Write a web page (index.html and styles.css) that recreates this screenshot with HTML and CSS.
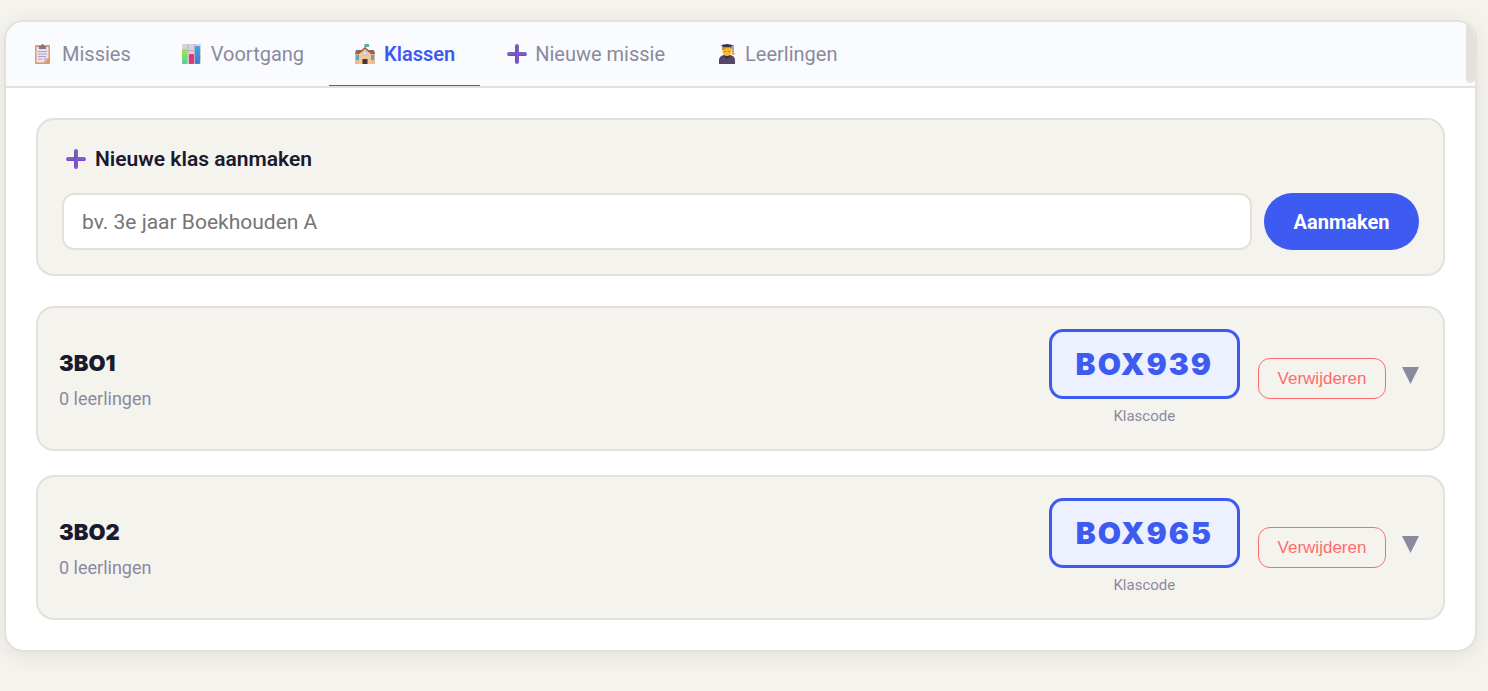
FILE: index.html
```html
<!DOCTYPE html>
<html lang="nl">
<head>
    <meta charset="UTF-8">
    <meta name="viewport" content="width=device-width, initial-scale=1.0">
    <title>Klassen</title>
    <link rel="stylesheet" href="styles.css">
</head>
<body>
    <!-- Shared icon shapes -->
    <svg class="defs" width="0" height="0" aria-hidden="true">
        <defs>
            <linearGradient id="purple" x1="0" y1="0" x2="0" y2="1">
                <stop offset="0" stop-color="#7a68b4"/>
                <stop offset="1" stop-color="#8552d8"/>
            </linearGradient>
            <linearGradient id="green" x1="0" y1="0" x2="0" y2="1">
                <stop offset="0" stop-color="#a5e34f"/>
                <stop offset="1" stop-color="#52d19a"/>
            </linearGradient>
            <linearGradient id="blue" x1="0" y1="0" x2="0" y2="1">
                <stop offset="0" stop-color="#35a7f4"/>
                <stop offset="1" stop-color="#3b7fc8"/>
            </linearGradient>
            <symbol id="plus" viewBox="0 0 24 24">
                <rect x="2" y="10" width="20" height="4" rx="2" fill="url(#purple)"/>
                <rect x="10" y="2" width="4" height="20" rx="2" fill="url(#purple)"/>
                <path d="M3 13.500H10M14 13.500H21" stroke="#7e3fe0"/>
                <path d="M11 4V20" stroke="#67509f" stroke-width="1"/>
            </symbol>
        </defs>
    </svg>

    <main class="panel">
        <nav class="tabs">
            <button class="tab" type="button">
                <svg class="icon" viewBox="0 0 24 24">
                    <rect x="3" y="3" width="15" height="19" rx="1" fill="#e29a64"/>
                    <path d="M4.500 5H16.500V16L12 20.500H4.500Z" fill="#e9e0f2"/>
                    <path d="M12 20.500V16H16.500Z" fill="#c9b8d6"/>
                    <path d="M6 9.500H15M6 12H15M6 14.500H14M6 17H10" stroke="#afa3c0"/>
                    <path d="M7 4H9Q9 2 10.500 2T12 4H14V7H7Z" fill="#83757f"/>
                </svg>
                Missies
            </button>
            <button class="tab" type="button">
                <svg class="icon" viewBox="0 0 24 24">
                    <rect x="1" y="2" width="19" height="20" rx="1" fill="#d8d2de"/>
                    <path d="M1 8.500H20M1 15H20M7 2V22M13.500 2V22" stroke="#b9b0c2"/>
                    <rect x="1" y="7" width="5" height="15" rx="1" fill="url(#green)"/>
                    <rect x="8" y="12" width="5" height="10" rx="1" fill="#e23574"/>
                    <rect x="14" y="4" width="5" height="18" rx="1" fill="url(#blue)"/>
                </svg>
                Voortgang
            </button>
            <button class="tab active" type="button">
                <svg class="icon" viewBox="0 0 24 24">
                    <path d="M11 2V7" stroke="#8d7a84"/>
                    <path d="M11 2L15 2V5H11Z" fill="#58b57b"/>
                    <path d="M1 11H21V22H1Z" fill="#eebc8c"/>
                    <path d="M2 8H20L21 12H1Z" fill="#8d6559"/>
                    <path d="M5 22V11L11 6L17 11V22Z" fill="#f6c795"/>
                    <path d="M4 12L11 6L18 12" fill="none" stroke="#8d5f50" stroke-width="1.500"/>
                    <circle cx="11" cy="11.500" r="2" fill="#e9e2f1" stroke="#a798ac" stroke-width=".5"/>
                    <path d="M2 13H5V18H2ZM17 13H20V18H17Z" fill="#4baadd"/>
                    <path d="M8.500 17H13.500V22H8.500Z" fill="#443441"/>
                </svg>
                Klassen
            </button>
            <button class="tab" type="button">
                <svg class="icon"><use href="#plus"/></svg>
                Nieuwe missie
            </button>
            <button class="tab" type="button">
                <svg class="icon" viewBox="0 0 24 24">
                    <path d="M4 22V18Q4 14 9 13H15Q20 14 20 18V22Z" fill="#564669"/>
                    <path d="M8 14L12 17L16 14L14 12H10Z" fill="#3c3045"/>
                    <path d="M7.500 5H16.500V9Q16 14 12 14T7.500 9Z" fill="#fbb72f"/>
                    <path d="M7 5H17V7Q12 4 8 8H7Z" fill="#c78a32"/>
                    <path d="M10 9V10M14 9V10" stroke="#775032"/>
                    <path d="M6 3L12 2L18 3L16 5H8Z" fill="#3c3246"/>
                    <path d="M18 3V11" stroke="#594767"/>
                    <circle cx="18" cy="11.500" r="1.500" fill="#f2aa32"/>
                </svg>
                Leerlingen
            </button>
        </nav>

        <div class="content">
            <form class="card new-class">
                <label class="form-title" for="className">
                    <svg class="icon"><use href="#plus"/></svg>
                    Nieuwe klas aanmaken
                </label>
                <div class="form-row">
                    <input type="text" id="className" placeholder="bv. 3e jaar Boekhouden A">
                    <button class="create-button" type="button">Aanmaken</button>
                </div>
            </form>

            <section class="card class-card">
                <div class="class-info">
                    <h2>3BO1</h2>
                    <p>0 leerlingen</p>
                </div>
                <div class="class-code">
                    <div class="code">BOX939</div>
                    <div class="code-label">Klascode</div>
                </div>
                <button class="delete-button" type="button">Verwijderen</button>
                <button class="toggle" type="button" aria-label="Uitklappen">
                    <svg viewBox="0 0 17 17"><path d="M0 0H17L8.500 17Z" fill="currentColor"/></svg>
                </button>
            </section>

            <section class="card class-card">
                <div class="class-info">
                    <h2>3BO2</h2>
                    <p>0 leerlingen</p>
                </div>
                <div class="class-code">
                    <div class="code">BOX965</div>
                    <div class="code-label">Klascode</div>
                </div>
                <button class="delete-button" type="button">Verwijderen</button>
                <button class="toggle" type="button" aria-label="Uitklappen">
                    <svg viewBox="0 0 17 17"><path d="M0 0H17L8.500 17Z" fill="currentColor"/></svg>
                </button>
            </section>
        </div>
    </main>
</body>
</html>
```

FILE: styles.css
```css
* {
    box-sizing: border-box;
}
body {
    margin: 0;
    padding: 20px 11px 39px 4px;
    background-color: #f5f3ee;
    color: #1a1a2e;
    font-family: Roboto, sans-serif;
    font-size: 20px;
}
.defs {
    position: absolute;
}
button, input {
    font-family: inherit;
    font-size: inherit;
}
button {
    cursor: pointer;
}
.icon {
    width: 24px;
    height: 24px;
    flex: none;
}
.panel {
    background-color: white;
    border: 2px solid #e4e1da;
    border-radius: 20px;
    box-shadow: 0 4px 24px rgba(0,0,0,0.08);
    overflow: hidden;
}
.tabs {
    position: relative;
    display: flex;
    height: 66px;
    padding-left: 1px;
    background-color: #fafbff;
    border-bottom: 2px solid #e4e1da;
}
/* Scrollbar thumb at the end of the tab bar */
.tabs::after {
    content: "";
    position: absolute;
    top: 0;
    right: 0;
    width: 9px;
    height: 61px;
    background-color: #e4e1da;
    border-radius: 0 0 5px 5px;
}
.tab {
    display: flex;
    align-items: center;
    gap: 6px;
    padding: 1px 25px 0;
    border: none;
    border-bottom: 1px solid transparent;
    background: none;
    color: #8a8a9e;
    white-space: nowrap;
}
.tab.active {
    color: #3d5af1;
    font-weight: 600;
    border-bottom-color: #3d5af1;
}
.content {
    display: flex;
    flex-direction: column;
    gap: 24px;
    padding: 30px;
}
.card {
    background-color: #f5f3ee;
    border: 2px solid #e4e1da;
    border-radius: 18px;
}
.new-class {
    margin-bottom: 6px;
    padding: 24px;
}
.form-title {
    display: flex;
    align-items: center;
    gap: 7px;
    height: 30px;
    margin-bottom: 19px;
    padding-left: 2px;
    font-size: 21px;
    font-weight: 600;
}
.form-row {
    display: flex;
    gap: 12px;
}
.form-row input {
    flex: 1;
    min-width: 0;
    height: 57px;
    padding: 0 18px;
    border: 2px solid #e4e1da;
    border-radius: 12px;
    background-color: white;
    font-size: 21px;
}
.form-row input::placeholder {
    color: #757575;
}
.create-button {
    width: 155px;
    border: none;
    border-radius: 30px;
    background-color: #3d5af1;
    color: white;
    font-weight: 700;
}
.class-card {
    display: flex;
    align-items: center;
    padding: 21px 24px 21px 21px;
}
.class-info {
    flex: 1;
}
.class-info h2 {
    margin: 0 0 8px;
    font-family: Inter, sans-serif;
    font-size: 22px;
    line-height: 32px;
    font-weight: 900;
}
.class-info p {
    margin: 0;
    color: #8a8a9e;
    font-size: 18px;
    line-height: 24px;
}
.class-code {
    margin-right: 18px;
    text-align: center;
}
.code {
    padding: 0 24px;
    border: 3px solid #3d5af1;
    border-radius: 14px;
    background-color: #edf1ff;
    color: #3d5af1;
    font-family: Inter, sans-serif;
    font-size: 30px;
    line-height: 64px;
    font-weight: 900;
    letter-spacing: 2px;
}
.code-label {
    margin-top: 5px;
    color: #8a8a9e;
    font-size: 15px;
    line-height: 24px;
}
.delete-button {
    min-width: 128px;
    height: 41px;
    margin-right: 16px;
    padding: 0 18px;
    border: 1px solid #ff6b6b;
    border-radius: 12px;
    background: none;
    color: #ff6b6b;
    font-family: "Liberation Sans", Arial, sans-serif;
    font-size: 17px;
}
.toggle {
    padding: 0 0 6px;
    border: none;
    background: none;
    color: #8a8a9e;
}
.toggle svg {
    display: block;
    width: 17px;
    height: 17px;
}
```
